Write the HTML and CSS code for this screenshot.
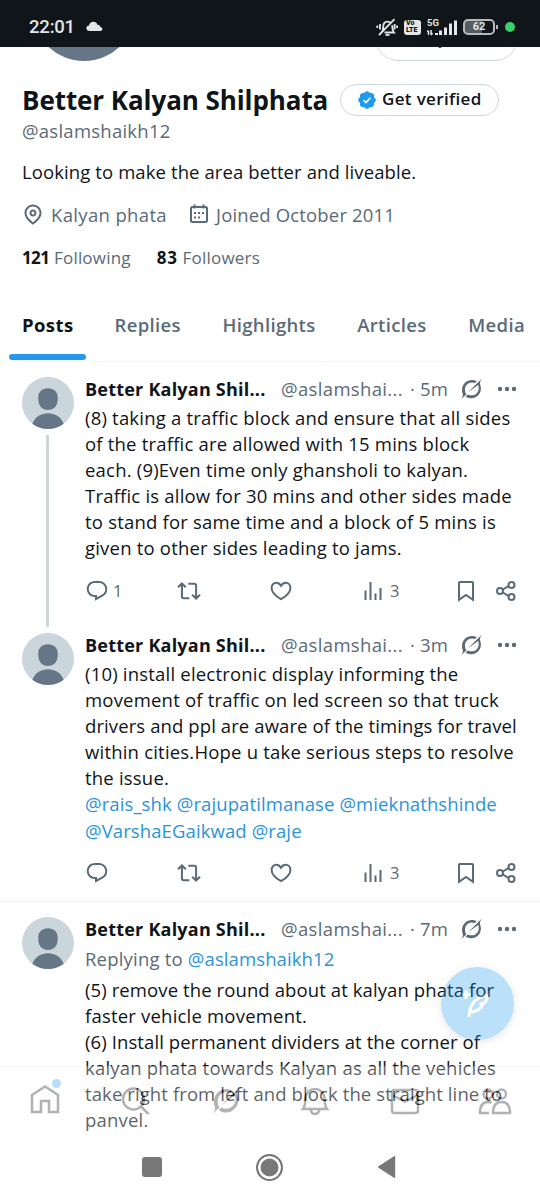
FILE: index.html
```html
<!DOCTYPE html>
<html>
	<head>
		<meta charset="UTF-8">
		<title>Better Kalyan Shilphata</title>
		<link rel="stylesheet" href="styles.css">
	</head>
	<body>
		<!-- icons -->
		<svg class="defs">
			<symbol id="avatar" viewBox="0 0 52 52">
				<circle cx="26" cy="26" r="26" fill="#cbd6dc"/>
				<path d="M26 11.300c6 0 9.800 3.700 9.800 9.500 0 7.500-3 12.200-9.800 12.200s-9.800-4.700-9.800-12.200c0-5.800 3.800-9.500 9.800-9.500z" fill="#657786"/>
				<path d="M10.300 46.700C13.500 39.800 19 36.300 26 36.300s12.500 3.500 15.700 10.400A26 26 0 0 1 10.300 46.700z" fill="#657786"/>
			</symbol>
			<symbol id="reply" viewBox="0 0 24 24"><path d="M1.751 10c0-4.420 3.584-8 8.005-8h4.366c4.490 0 8.129 3.640 8.129 8.130 0 2.960-1.607 5.680-4.196 7.110l-8.054 4.460v-3.690h-.067c-4.490.100-8.183-3.510-8.183-8.010zm8.005-6c-3.317 0-6.005 2.690-6.005 6 0 3.370 2.770 6.080 6.138 6.010l.351-.010h1.761v2.300l5.087-2.810c1.951-1.080 3.163-3.130 3.163-5.360 0-3.390-2.744-6.130-6.129-6.130H9.756z"/></symbol>
			<symbol id="repost" viewBox="0 0 24 20"><path class="line" d="M1 6.300L4.900 2.500l3.900 3.800M4.900 2.800v12.700q0 1.800 1.800 1.800h5.600M11.300 2.700h6q1.800 0 1.800 1.800v12.700M15.200 13.700l3.900 3.800 3.900-3.800"/></symbol>
			<symbol id="heart" viewBox="0 0 22 20"><path class="line" d="M11 18.200C5.500 14.900 1.600 11 1.600 6.900 1.600 3.900 3.700 1.800 6.200 1.800c2 0 3.600 1 4.800 3 1.200-2 2.800-3 4.800-3 2.500 0 4.600 2.100 4.600 5.100 0 4.100-3.900 8-9.400 11.300z"/></symbol>
			<symbol id="views" viewBox="0 0 18 20"><path class="line" d="M1.500 19V9.500M6.500 19V1M11.500 19v-6.500M16.500 19V7"/></symbol>
			<symbol id="bookmark" viewBox="0 0 18 22"><path class="line" d="M2 2.900Q2 2 2.900 2h12.200q.9 0 .9.900v17L9 14.900 2 19.900z"/></symbol>
			<symbol id="share" viewBox="0 0 20 20"><path class="line" d="M6.800 8.500l5.700-3.300M6.800 11.500l5.700 3.300"/><circle class="line" cx="4" cy="10" r="3"/><circle class="line" cx="15.500" cy="4" r="3"/><circle class="line" cx="15.500" cy="16" r="3"/></symbol>
			<symbol id="grok" viewBox="0 0 24 24">
				<path d="M1 23.300c2.300-2.400 3.600-4 2.500-7.100C1.500 10.500 5.500 3.200 12.500 3c2 0 3.900.500 5.300 1.400l-2.200 1.600c-5-1.900-9.700 1.700-9.600 6.700 0 1.900.600 3.400 1.300 4.700z"/>
				<path d="M9.200 15.200L23.300 1c-2.300 3.100-3 4.800-1.800 7.700 2.200 7.400-4.300 14.100-11.600 12.300-1.200-.300-2.300-.800-3.300-1.600l2.200-2c5.200 2.800 11.100-.800 10.900-6.500 0-1-.2-2-.6-2.800z"/>
			</symbol>
			<symbol id="dots" viewBox="0 0 20 6"><circle cx="3" cy="3" r="2.200"/><circle cx="10" cy="3" r="2.200"/><circle cx="17" cy="3" r="2.200"/></symbol>
		</svg>

		<div class="status">
			<span class="clock">22:01</span>
			<svg class="cloud" viewBox="0 0 18 11"><path d="M4 10.300C1.600 10.300.400 9 .400 7.300c0-1.700 1.200-2.700 2.800-2.800C3.500 2 5.500.400 7.800.400c2.200 0 3.800 1.300 4.300 3.300 2 .100 2.900 1 3 2.300 1.400.200 2.300 1 2.300 2.200 0 1.300-1 2.100-2.400 2.100z"/></svg>
			<div class="signals">
				<svg class="mute" viewBox="0 0 22 19"><path d="M5.500 14.500c1.500-1.300 1.700-3 1.700-5.500C7.200 5.500 9 3.600 11.500 3.600c1.300 0 2.500.5 3.300 1.500M16.200 7.300c.1 3.500.3 5.500 1.800 7.200H8.500M3 17L18.500 1.200M4 6v5.500M1.300 7.500V10M18.600 6v5.500M21 7.500V10"/><path d="M9.500 17h4"/></svg>
				<span class="volte"><b>Vo</b><b>LTE</b></span>
				<div class="net">
					<b>5G</b>
					<svg viewBox="0 0 32 17"><path d="M2.500 16v-4M1 12.500l1.500-1M5 11v4.500M6.500 14l-1.500 2"/><path class="bar" d="M10.500 16v-2M14.500 16v-4.500M19.500 16V8.500M24.500 16V4.500M29.500 16V1.500"/></svg>
				</div>
				<div class="battery"><span>62</span></div>
				<i class="live"></i>
			</div>
		</div>

		<div class="profile">
			<div class="cover">
				<div class="photo"></div>
				<div class="edit">Edit profile</div>
			</div>
			<div class="title">
				<h1>Better Kalyan Shilphata</h1>
				<div class="verify">
					<svg viewBox="1.500 1.500 21 21"><path d="M22.250 12c0-1.430-.880-2.670-2.190-3.340.460-1.390.200-2.900-.810-3.910s-2.520-1.270-3.910-.810c-.660-1.310-1.910-2.190-3.340-2.190s-2.670.880-3.330 2.190c-1.400-.460-2.910-.200-3.920.810s-1.260 2.520-.800 3.910c-1.310.670-2.200 1.910-2.200 3.340s.890 2.670 2.200 3.340c-.460 1.390-.210 2.900.800 3.910s2.520 1.260 3.910.810c.670 1.310 1.910 2.190 3.340 2.190s2.680-.880 3.340-2.190c1.390.450 2.900.200 3.910-.810s1.270-2.520.810-3.910c1.310-.670 2.190-1.910 2.190-3.340z"/><path class="tick" d="M8 12.300l2.800 2.700 5.200-5.600"/></svg>
					<span>Get verified</span>
				</div>
			</div>
			<div class="handle">@aslamshaikh12</div>
			<div class="bio">Looking to make the area better and liveable.</div>
			<div class="meta">
				<svg class="pin" viewBox="3 1.500 18 21"><path d="M12 7c-1.930 0-3.500 1.570-3.500 3.500S10.070 14 12 14s3.500-1.570 3.500-3.500S13.930 7 12 7zm0 5c-.827 0-1.500-.673-1.500-1.500S11.173 9 12 9s1.500.673 1.500 1.500S12.827 12 12 12zm0-10c-4.687 0-8.500 3.813-8.500 8.500 0 5.967 7.621 11.116 7.945 11.332l.555.370.555-.370c.324-.216 7.945-5.365 7.945-11.332C20.500 5.813 16.687 2 12 2zm0 17.770c-1.665-1.241-6.500-5.196-6.500-9.270C5.500 6.916 8.416 4 12 4s6.500 2.916 6.500 6.500c0 4.073-4.835 8.028-6.500 9.270z"/></svg>
				<span class="place">Kalyan phata</span>
				<svg class="cal" viewBox="0 0 20 20"><rect class="line" x="2" y="3" width="16" height="15" rx="1.500"/><path class="line" d="M5.500 .5v4M14.500 .5v4"/><path d="M5 8h2v2H5zM9 8h2v2H9zM13 8h2v2h-2zM5 12.500h2v2H5zM9 12.500h2v2H9z"/></svg>
				<span class="joined">Joined October 2011</span>
			</div>
			<div class="counts">
				<span class="following"><b>121</b> Following</span>
				<span class="followers"><b>83</b> Followers</span>
			</div>
		</div>

		<div class="tabs">
			<span class="ac">Posts</span>
			<span>Replies</span>
			<span>Highlights</span>
			<span>Articles</span>
			<span>Media</span>
		</div>

		<div class="post thread">
			<div class="side"><svg class="face"><use href="#avatar"/></svg><i></i></div>
			<div class="main">
				<div class="head">
					<b>Better Kalyan Shil...</b><span class="user">@aslamshai...</span><span class="time">· 5m</span>
					<svg class="grok"><use href="#grok"/></svg><svg class="dots"><use href="#dots"/></svg>
				</div>
				<p>(8) taking a traffic block and ensure that all sides<br>of the traffic are allowed with 15 mins block<br>each. (9)Even time only ghansholi to kalyan.<br>Traffic is allow for 30 mins and other sides made<br>to stand for same time and a block of 5 mins is<br>given to other sides leading to jams.</p>
				<div class="actions">
					<span><svg class="reply"><use href="#reply"/></svg>1</span>
					<span><svg class="repost"><use href="#repost"/></svg></span>
					<span><svg class="heart"><use href="#heart"/></svg></span>
					<span><svg class="views"><use href="#views"/></svg>3</span>
					<span><svg class="bookmark"><use href="#bookmark"/></svg></span>
					<span><svg class="share"><use href="#share"/></svg></span>
				</div>
			</div>
		</div>

		<div class="post last">
			<div class="side"><svg class="face"><use href="#avatar"/></svg></div>
			<div class="main">
				<div class="head">
					<b>Better Kalyan Shil...</b><span class="user">@aslamshai...</span><span class="time">· 3m</span>
					<svg class="grok"><use href="#grok"/></svg><svg class="dots"><use href="#dots"/></svg>
				</div>
				<p>(10) install electronic display informing the<br>movement of traffic on led screen so that truck<br><span class="tight">drivers and ppl are aware of the timings for travel</span><br>within cities.Hope u take serious steps to resolve<br>the issue.<br><a>@rais_shk @rajupatilmanase @mieknathshinde</a><br><a>@VarshaEGaikwad @raje</a></p>
				<div class="actions">
					<span><svg class="reply"><use href="#reply"/></svg></span>
					<span><svg class="repost"><use href="#repost"/></svg></span>
					<span><svg class="heart"><use href="#heart"/></svg></span>
					<span><svg class="views"><use href="#views"/></svg>3</span>
					<span><svg class="bookmark"><use href="#bookmark"/></svg></span>
					<span><svg class="share"><use href="#share"/></svg></span>
				</div>
			</div>
		</div>

		<div class="post">
			<div class="side"><svg class="face"><use href="#avatar"/></svg></div>
			<div class="main">
				<div class="head">
					<b>Better Kalyan Shil...</b><span class="user">@aslamshai...</span><span class="time">· 7m</span>
					<svg class="grok"><use href="#grok"/></svg><svg class="dots"><use href="#dots"/></svg>
				</div>
				<div class="to">Replying to <a>@aslamshaikh12</a></div>
				<p><span class="tight">(5) remove the round about at kalyan phata for</span><br>faster vehicle movement.<br><span class="tight">(6) Install permanent dividers at the corner of</span><br>kalyan phata towards Kalyan as all the vehicles<br><span class="tight">take right from left and block the straight line to</span><br>panvel.</p>
			</div>
		</div>

		<div class="fab">
			<svg viewBox="0 0 30 30"><path d="M5 2v9M.5 6.500h9"/><path d="M8 29c.3-11.500 5-20 18.500-21.500-.3 4-1.500 6.500-4 8.200h-4 3.500c-1.500 5-5.500 7.800-13 8.300"/></svg>
		</div>

		<div class="nav">
			<span><svg class="home" viewBox="0 0 30 30"><path d="M2 11L15 2.500 28 11v17h-9V17h-8v11H2z"/></svg><i></i></span>
			<span><svg viewBox="0 0 30 30"><circle cx="13.500" cy="13" r="10.500"/><path d="M21 20.500l7.500 7.500"/></svg></span>
			<span><svg class="big" viewBox="0 0 24 24"><use href="#grok"/></svg></span>
			<span><svg viewBox="0 0 30 30"><path d="M3 23c2.500-3 2-6 2.500-11C6 6.500 10 3 15 3s9 3.500 9.500 9c.5 5 0 8 2.500 11zM10.500 23c.5 3.500 2 5 4.500 5s4-1.500 4.500-5"/></svg></span>
			<span><svg viewBox="0 0 30 30"><rect x="2" y="4" width="26" height="23" rx="2.500"/><path d="M2 9l13 6.500L28 9"/></svg></span>
			<span><svg class="people" viewBox="0 0 34 30"><circle cx="10" cy="8" r="4.500"/><circle cx="23.500" cy="8" r="4.500"/><path d="M11 27H2c0-7 2.500-11 8-11 1.500 0 2.500.3 3.500.8M15 27c0-7 3-11 8.500-11s8.500 4 8.500 11z"/></svg></span>
		</div>

		<div class="system">
			<i class="recent"></i>
			<i class="circle"></i>
			<svg class="back" viewBox="0 0 19 24"><path d="M1.500 11.200L17 1.200q1.200-.7 1.200.7v20.200q0 1.400-1.200.7L1.500 12.800q-1.200-.8 0-1.600z"/></svg>
		</div>
	</body>
</html>
```
FILE: styles.css
```css
*{margin: 0;padding: 0;box-sizing: border-box;}
body{width: 540px;height: 1200px;overflow: hidden;position: relative;background: #fff;color: #0f1419;font-family: "Open Sans",sans-serif;font-size: 18.5px;letter-spacing: 0.2px;white-space: nowrap;}
svg{display: block;flex: none;fill: currentColor;}
i{display: block;}
a{color: #2a93dd;letter-spacing: 0.1px;}
.defs{position: absolute;width: 0;height: 0;}
.line{fill: none;stroke: currentColor;stroke-width: 2;}

/* status bar */
.status{height: 47px;padding: 7px 25px 0 29px;background: #0f1518;color: #e4e6e7;display: flex;align-items: center;}
.clock{font: 500 18.5px Roboto,sans-serif;letter-spacing: -0.2px;}
.cloud{width: 17px;height: 11px;margin: -2px 0 0 11px;}
.signals{margin-left: auto;display: flex;align-items: center;}
.mute{width: 22px;height: 19px;fill: none;stroke: currentColor;stroke-width: 1.8;}
.volte{width: 17px;height: 15px;margin: 0 5px 0 6px;padding: 0 2px;border-radius: 3px;background: #e4e6e7;color: #0f1518;}
.volte b{display: block;font: 900 7px/7.5px Roboto,sans-serif;letter-spacing: 0;}
.net{width: 32px;height: 17px;position: relative;}
.net b{position: absolute;left: 1px;top: -1px;font: 700 9.5px/9px Roboto,sans-serif;letter-spacing: 0;}
.net svg{width: 32px;height: 17px;fill: none;stroke: currentColor;stroke-width: 1.5;}
.net .bar{stroke-width: 3;}
.battery{width: 32px;height: 16px;margin: 0 10px 0 5px;border: 2px solid #b6babc;border-radius: 5px;background: linear-gradient(90deg,#565c60 60%,#0f1518 60%);position: relative;text-align: center;}
.battery:after{content: "";position: absolute;right: -5px;top: 4px;width: 2px;height: 4px;background: #b6babc;}
.battery span{display: block;font: 700 11px/12px Roboto,sans-serif;letter-spacing: 0;}
.live{width: 10px;height: 10px;border-radius: 50%;background: #38d067;}

/* profile */
.profile{height: 235px;padding: 0 22px;}
.cover{height: 14px;display: flex;justify-content: space-between;align-items: flex-end;overflow: hidden;}
.photo{width: 104px;height: 104px;margin-left: 10px;border-radius: 50%;background: #657786;}
.edit{width: 143px;height: 46px;border: 1px solid #cfd9de;border-radius: 23px;text-align: center;font-size: 17px;font-weight: 600;line-height: 43px;}
.title{height: 32px;margin-top: 23px;display: flex;align-items: center;}
h1{width: 318px;font-size: 26px;line-height: 32px;font-weight: 700;letter-spacing: -0.08px;}
.verify{width: 159px;height: 32px;border: 1px solid #cfd9de;border-radius: 16px;display: flex;align-items: center;padding-left: 17px;font-size: 17px;line-height: 28px;font-weight: 600;letter-spacing: 0.35px;}
.verify svg{width: 18px;height: 18px;margin-right: 6px;fill: #1d9bf0;}
.verify span{margin-top: -2px;}
.verify .tick{fill: none;stroke: #fff;stroke-width: 2;}
.handle{margin-top: 2px;line-height: 26px;color: #5b6a77;letter-spacing: 0.25px;}
.bio{margin-top: 15px;line-height: 26px;letter-spacing: 0.1px;}
.meta{margin-top: 16px;height: 26px;display: flex;align-items: center;color: #5b6a77;}
.pin{width: 18px;height: 21px;margin: 0 9px 0 2px;}
.place{width: 138px;letter-spacing: 0.35px;}
.cal{width: 20px;height: 20px;margin-right: 7px;}
.joined{letter-spacing: 0.16px;}
.counts{margin-top: 18px;display: flex;gap: 26px;font-size: 17px;line-height: 26px;color: #5b6a77;}
.counts b{color: #0f1419;}
.following b{letter-spacing: -0.6px;}
.followers b{letter-spacing: 0.9px;}

/* tabs */
.tabs{height: 80px;padding: 0 9px;border-bottom: 1px solid #f2f4f5;display: flex;gap: 15.5px;font-size: 18.5px;font-weight: 600;letter-spacing: 0.35px;color: #5b6a77;}
.tabs span{padding: 28px 13px 0;line-height: 30px;position: relative;}
.tabs .ac{color: #0f1419;font-weight: 700;width: 77px;letter-spacing: 0.4px;}
.tabs .ac:after{content: "";position: absolute;left: 0;bottom: 1px;width: 77px;height: 6px;border-radius: 3px;background: #2299ea;}

/* posts */
.post{display: flex;padding: 15px 22px 0;}
.thread{height: 256px;}
.last{height: 284px;border-bottom: 1px solid #eff3f4;}
.side{width: 63px;flex: none;display: flex;flex-direction: column;}
.face{width: 52px;height: 52px;}
.side i{width: 3px;height: 192px;flex: none;margin: 6px 0 0 24px;background: #cfd6d8;}
.main{width: 440px;flex: none;margin-top: -1px;}
.head{height: 26px;display: flex;align-items: center;color: #5b6a77;}
.head b{width: 196px;font-size: 18px;color: #0f1419;letter-spacing: 0.22px;}
.user{width: 129px;margin-top: -1px;letter-spacing: 0.35px;}
.time{width: 49px;margin-top: -1px;}
.grok{width: 24px;height: 24px;}
.dots{width: 20px;height: 6px;margin-left: 14px;}
.head + p{margin-top: 3px;}
p{line-height: 26.1px;}
.tight{letter-spacing: 0.1px;}
.to{margin-top: 4px;line-height: 26px;color: #5b6a77;}
.to + p{margin-top: 5px;}
.actions{height: 24px;margin-top: 17px;display: grid;grid-template-columns: 92px 93px 94px 93px 39px 24px;align-items: center;color: #5b6a77;font-size: 16.5px;}
.actions span{display: flex;align-items: center;}
.reply{width: 24px;height: 24px;margin-right: 4px;}
.repost{width: 24px;height: 20px;}
.heart{width: 22px;height: 20px;}
.views{width: 18px;height: 20px;margin-right: 8px;}
.bookmark{width: 18px;height: 22px;}
.share{width: 20px;height: 20px;}

/* floating parts */
.fab{position: absolute;left: 441px;top: 967px;width: 73px;height: 73px;border-radius: 50%;background: #1d9bf0;opacity: 0.3;display: flex;align-items: center;justify-content: center;box-shadow: 0 2px 8px rgba(0,0,0,0.3);}
.fab svg{width: 30px;height: 30px;margin: -2px 4px 0 0;fill: none;stroke: #fff;stroke-width: 3;}
.nav{position: absolute;left: 0;top: 1066px;width: 540px;height: 78px;border-top: 1px solid #dde2e4;background: #fff;opacity: 0.32;display: flex;}
.nav span{width: 90px;display: flex;align-items: center;justify-content: center;position: relative;margin-top: -10px;}
.nav svg{width: 30px;height: 30px;fill: none;stroke: #0f1419;stroke-width: 2.5;}
.nav .home{margin-top: -3px;}
.nav .big{width: 31px;height: 31px;fill: #0f1419;stroke: none;}
.nav .people{width: 34px;}
.nav i{position: absolute;left: 52px;top: 22px;width: 9px;height: 9px;border-radius: 50%;background: #1d9bf0;}
.system{position: absolute;left: 0;bottom: 20px;width: 540px;height: 26px;padding-left: 142px;display: flex;align-items: center;color: #787878;}
.recent{width: 20px;height: 20px;border-radius: 3px;background: #787878;}
.circle{width: 27px;height: 27px;margin: 0 94px;border: 2px solid #787878;border-radius: 50%;background: #787878;box-shadow: inset 0 0 0 2.5px #fff;}
.back{width: 19px;height: 24px;}
```
